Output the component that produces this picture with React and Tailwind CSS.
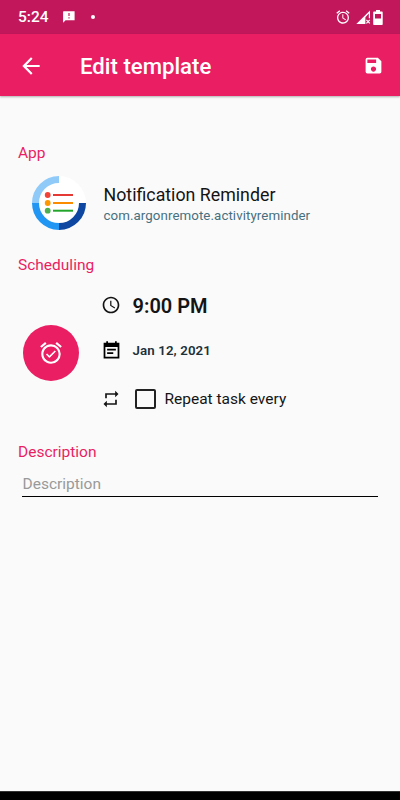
import React, { useState } from 'react';
import {
  MdAccessTime,
  MdAlarm,
  MdAlarmOn,
  MdArrowBack,
  MdRepeat,
  MdSave,
} from 'react-icons/md';

// --- STATUS BAR ICONS ---
function FeedbackIcon() {
  return (
    <svg width="12" height="12" viewBox="0 0 12 12">
      <path fillRule="evenodd" fill="#fff" d="M0.6 0.3H11.6V9.2H2.6L0.1 11.7V0.8ZM5.4 2V5H6.6V2ZM5.4 6.2V7.5H6.6V6.2Z" />
    </svg>
  );
}

function SignalIcon() {
  return (
    <svg width="15" height="15" viewBox="0 0 15 15" fill="none">
      <path d="M0.3 14L14 0.5V8.2H12.8V3.5L9.4 7.3V14Z" fill="#fff" />
      <path d="M10.4 9.8L13.8 13.4M13.8 9.8L10.4 13.4" stroke="#fff" strokeWidth="1.2" />
    </svg>
  );
}

function BatteryIcon() {
  return (
    <svg width="10" height="15" viewBox="0 0 10 15">
      <path fillRule="evenodd" fill="#fff" d="M3 0H7V1.5H9Q9.7 1.5 9.7 2.3V14.2Q9.7 15 9 15H1Q0.2 15 0.2 14.2V2.3Q0.2 1.5 1 1.5H3ZM2 4V8.5H8V4Z" />
    </svg>
  );
}

// Calendar with a solid header
function CalendarIcon() {
  return (
    <svg width="21" height="21" viewBox="0 0 24 24" fill="#000">
      <path d="M17 10H7v2h10v-2zm2-7h-1V1.5h-2V3H8V1.5H6V3H3v18h18V3h-2zm0 16H5V8h14v11zm-5-5H7v2h7v-2z" />
    </svg>
  );
}

// Ring with three coloured list rows
function AppLogo() {
  return (
    <svg width="54" height="54" viewBox="0 0 54 54" fill="none">
      <circle cx="27" cy="27" r="27" fill="#fff" />
      <path d="M3.5 27A23.5 23.5 0 0 1 27 3.5" stroke="#90caf9" strokeWidth="7" />
      <path d="M27 50.5A23.5 23.5 0 0 1 3.5 27" stroke="#2196f3" strokeWidth="7" />
      <path d="M50.5 27A23.5 23.5 0 0 1 27 50.5" stroke="#0d47a1" strokeWidth="7" />
      <circle cx="15.7" cy="19" r="2.9" fill="#f44336" />
      <circle cx="15.7" cy="27" r="2.9" fill="#ff9800" />
      <circle cx="15.7" cy="34.7" r="2.9" fill="#4caf50" />
      <path d="M21 19H41" stroke="#e53935" strokeWidth="2" />
      <path d="M21 27H41" stroke="#fb8c00" strokeWidth="2" />
      <path d="M21 34.7H41" stroke="#23a52b" strokeWidth="2" />
    </svg>
  );
}

function App() {
  const [repeat, setRepeat] = useState(false);
  const [description, setDescription] = useState('');

  return (
    <div className="flex flex-col w-[400px] h-[800px] bg-[#fafafa] font-['Roboto',sans-serif] overflow-hidden">

      {/* --- STATUS BAR --- */}
      <div className="flex items-center h-[34px] shrink-0 bg-[#c2185b] text-white pl-[18px] pr-[17px]">
        <span className="w-[31px] pt-[2px] mr-[14px] text-[15.5px] font-medium whitespace-nowrap">5:24</span>
        <FeedbackIcon />
        <span className="ml-[16px] mb-px w-[4px] h-[4px] rounded-full bg-white" />
        <div className="flex items-center ml-auto">
          <MdAlarm className="w-[16px] h-[16px] mr-[5px]" />
          <SignalIcon />
          <span className="w-[2px]" />
          <BatteryIcon />
        </div>
      </div>

      {/* --- TOOLBAR --- */}
      <div className="flex items-center h-[62px] shrink-0 bg-[#e91e63] text-white pl-[18px] pr-[16px] shadow-[0_1px_2px_rgba(0,0,0,0.3)]">
        <button type="button" className="pt-px">
          <MdArrowBack className="w-[26px] h-[26px]" />
        </button>
        <h1 className="ml-[36px] pt-[3px] text-[22.2px] font-medium whitespace-nowrap">Edit template</h1>
        <button type="button" className="ml-auto">
          <MdSave className="w-[21px] h-[21px]" />
        </button>
      </div>

      {/* --- FORM --- */}
      <div className="flex-1 px-[18px]">
        <h2 className="mt-[47px] h-[20px] leading-[20px] text-[15.5px] text-[#e91e63]">App</h2>
        <div className="flex items-center mt-[13px] ml-[14px] h-[54px]">
          <AppLogo />
          <div className="ml-[17.5px] pt-[4px] whitespace-nowrap">
            <p className="h-[22px] leading-[22px] text-[17.8px] text-[#141414]">Notification Reminder</p>
            <p className="h-[20px] leading-[20px] text-[13.3px] tracking-[0.08px] text-[#46707f]">com.argonremote.activityreminder</p>
          </div>
        </div>

        <h2 className="mt-[25px] h-[20px] leading-[20px] text-[15.5px] text-[#e91e63]">Scheduling</h2>
        <div className="flex items-center mt-[9px] h-[138px]">
          <div className="flex items-center justify-center ml-[5px] w-[56px] h-[56px] rounded-full bg-[#e91e63] text-white">
            <MdAlarmOn className="w-[26px] h-[26px]" />
          </div>
          <div className="flex flex-col ml-[22px] text-[#141414] whitespace-nowrap">
            <div className="flex items-center h-[41px]">
              <MdAccessTime className="w-[20px] h-[20px]" />
              <span className="ml-[11.5px] pt-[2px] text-[20px] font-semibold">9:00 PM</span>
            </div>
            <div className="flex items-center h-[51px]">
              <CalendarIcon />
              <span className="ml-[10.5px] text-[13.3px] tracking-[0.1px] font-semibold text-[#1c313a]">Jan 12, 2021</span>
            </div>
            <label className="flex items-center h-[46px]">
              <MdRepeat className="w-[20px] h-[20px]" />
              <input
                type="checkbox"
                checked={repeat}
                onChange={(e) => setRepeat(e.target.checked)}
                className="appearance-none ml-[14px] w-[21px] h-[20px] rounded-[2px] border-2 border-[#222] checked:bg-[#e91e63]"
              />
              <span className="ml-[8.5px] pt-[2px] text-[15.5px]">Repeat task every</span>
            </label>
          </div>
        </div>

        <h2 className="mt-[20px] h-[20px] leading-[20px] text-[15.5px] text-[#e91e63]">Description</h2>
        <input
          type="text"
          value={description}
          onChange={(e) => setDescription(e.target.value)}
          placeholder="Description"
          className="block mt-[10px] ml-[4px] w-[356px] h-[25px] pl-[0.5px] border-b border-black text-[15.5px] text-[#141414] placeholder:text-[#999] outline-none"
        />
      </div>

      {/* --- NAVIGATION BAR --- */}
      <div className="h-[9px] shrink-0 bg-black border-t border-[#333]" />
    </div>
  );
}

export default App;
